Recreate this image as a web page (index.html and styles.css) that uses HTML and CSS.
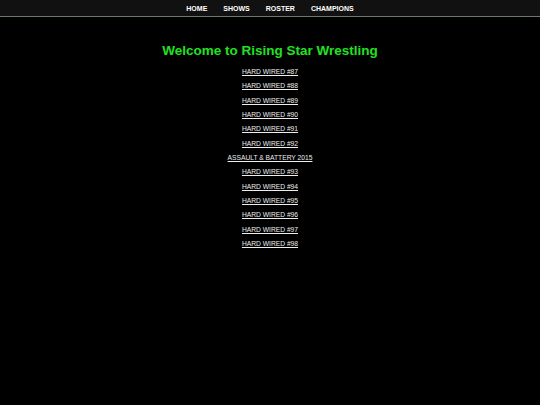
FILE: index.html
```html
<!DOCTYPE html>
<html>
<head>
<meta charset="utf-8">
<link rel="stylesheet" href="styles.css">
</head>
<body>
<nav class="topnav">
  <a class="nav-item" href="#">HOME</a>
  <a class="nav-item" href="#">SHOWS</a>
  <a class="nav-item" href="#">ROSTER</a>
  <a class="nav-item" href="#">CHAMPIONS</a>
</nav>
<main class="content">
  <h1 class="title">Welcome to Rising Star Wrestling</h1>
  <ul class="shows">
    <li><a href="#">HARD WIRED #87</a></li>
    <li><a href="#">HARD WIRED #88</a></li>
    <li><a href="#">HARD WIRED #89</a></li>
    <li><a href="#">HARD WIRED #90</a></li>
    <li><a href="#">HARD WIRED #91</a></li>
    <li><a href="#">HARD WIRED #92</a></li>
    <li><a href="#">ASSAULT &amp; BATTERY 2015</a></li>
    <li><a href="#">HARD WIRED #93</a></li>
    <li><a href="#">HARD WIRED #94</a></li>
    <li><a href="#">HARD WIRED #95</a></li>
    <li><a href="#">HARD WIRED #96</a></li>
    <li><a href="#">HARD WIRED #97</a></li>
    <li><a href="#">HARD WIRED #98</a></li>
  </ul>
</main>
</body>
</html>
```

FILE: styles.css
```css
html, body {
  margin: 0;
  padding: 0;
  background: #000;
  font-family: "Liberation Sans", Arial, sans-serif;
}
.topnav {
  display: flex;
  justify-content: center;
  align-items: center;
  height: 16px;
  background: #111;
  border-bottom: 1px solid #6b7a6b;
}
.nav-item {
  color: #fff;
  font-weight: bold;
  font-size: 7px;
  text-decoration: none;
  padding: 0 8px;
}
.content {
  text-align: center;
}
.title {
  color: #22e022;
  font-size: 13.5px;
  font-weight: bold;
  margin: 25px 0 5px;
  line-height: 18px;
}
.shows {
  list-style: none;
  margin: 0;
  padding: 0;
}
.shows li {
  line-height: 14.33px;
  font-size: 6.7px;
}
.shows a {
  color: #eee;
  text-decoration: underline;
}
```
